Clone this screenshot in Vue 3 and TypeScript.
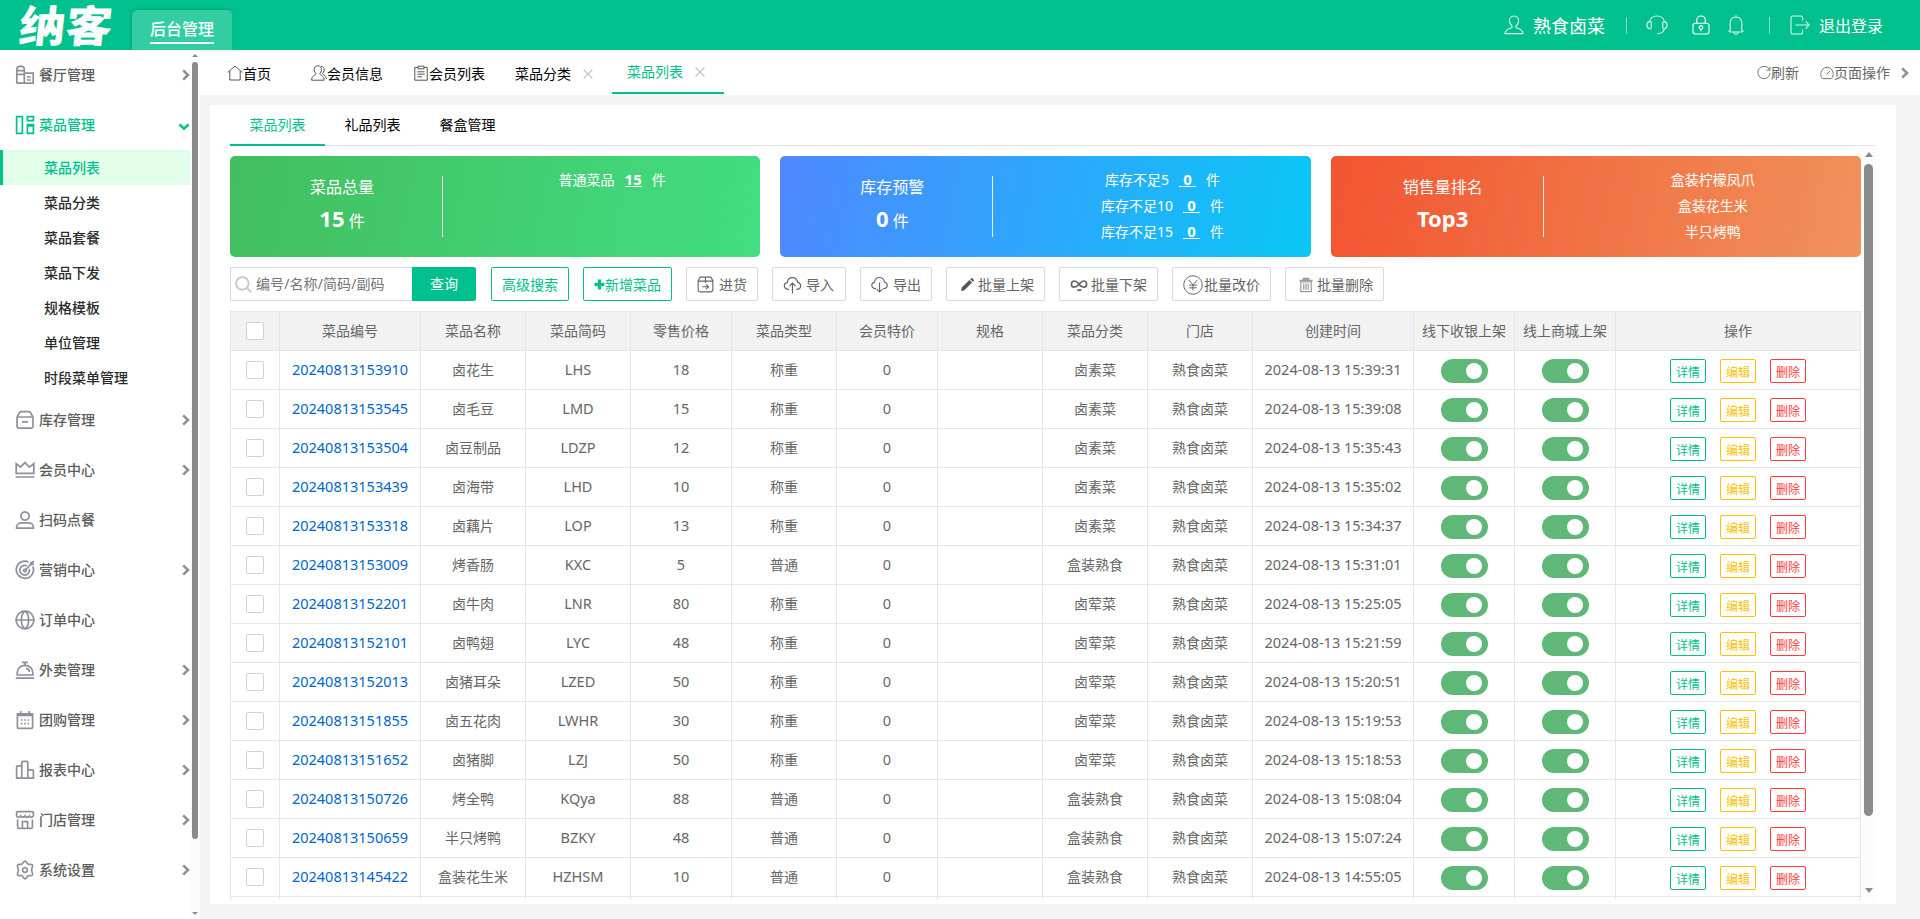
<script setup lang="ts">
interface MenuItem {
  label: string
  icon: string
  arrow: boolean
}

interface Dish {
  no: string
  name: string
  code: string
  price: string
  type: string
  category: string
  time: string
}

const topMenu: MenuItem[] = [
  { label: '餐厅管理', arrow: true, icon: 'M1.8 18.2V4.2C1.8 2.6 3.6 1.4 5.5 1.2C7.4 1.4 9.3 2.6 9.3 4.2V18.2M1.8 18.2H18.2V8.2H9.3M1.8 5.6H9.3M1.8 9.4H9.3M12 12H15.8M12 15H15.8' },
]

const subMenu: string[] = ['菜品列表', '菜品分类', '菜品套餐', '菜品下发', '规格模板', '单位管理', '时段菜单管理']

const bottomMenu: MenuItem[] = [
  { label: '库存管理', arrow: true, icon: 'M2 7L4.6 2.4C4.9 2 5.3 1.6 6 1.6H14C14.7 1.6 15.1 2 15.4 2.4L18 7M1.4 7H18.6M2 7V16.6C2 17.6 2.6 18.2 3.6 18.2H16.4C17.4 18.2 18 17.6 18 16.6V7M7 11.8H13' },
  { label: '会员中心', arrow: true, icon: 'M1.2 3.6L5.6 7.2L10 2.6L14.4 7.2L18.8 3.6V13.4H1.2ZM0.6 17H19.4' },
  { label: '扫码点餐', arrow: false, icon: 'M10 1.8A4.2 4.2 0 1 1 9.99 1.8M1.6 18.2V17C1.6 14.2 4.2 12.8 6.8 12.8H13.2C15.8 12.8 18.4 14.2 18.4 17V18.2Z' },
  { label: '营销中心', arrow: true, icon: 'M13.6 2A8.6 8.6 0 1 0 17.8 6.4M11.8 6A4.8 4.8 0 1 0 14.2 9M10 9.2A1.3 1.3 0 1 1 9.9 9.2M10 10.5L15.6 4.6M15.6 4.6L15.8 1.8M15.6 4.6L18.8 4.2M18.8 1.2L15.6 4.6' },
  { label: '订单中心', arrow: false, icon: 'M10 1.2A8.8 8.8 0 1 1 9.99 1.2M1.2 10H18.8M10 1.2C5.2 4 5.2 16 10 18.8M10 1.2C14.8 4 14.8 16 10 18.8' },
  { label: '外卖管理', arrow: true, icon: 'M2.2 15V12.8C2.2 8.4 5.6 5.4 10 5.4S17.8 8.4 17.8 12.8V15ZM7 2.4H13M10 2.4V5.4M0.8 18.2H19.2M11 8.4C13 8.8 14.4 10 14.6 12' },
  { label: '团购管理', arrow: true, icon: 'M2.4 3.8H17.6V17C17.6 17.8 17.2 18.4 16.4 18.4H3.6C2.8 18.4 2.4 17.8 2.4 17ZM2.4 5.4H17.6M5.8 1V5M14.2 1V5M5.8 10H7.4M9.2 10H10.8M12.6 10H14.2M5.8 13.6H7.4M9.2 13.6H10.8M12.6 13.6H14.2' },
  { label: '报表中心', arrow: true, icon: 'M6.8 18.2V2.6C6.8 1.8 7.2 1.4 8 1.4H11.6C12.4 1.4 12.8 1.8 12.8 2.6V18.2M6.8 5.8H2.8C2 5.8 1.6 6.2 1.6 7V18.2H18.4V11C18.4 10.2 18 9.8 17.2 9.8H12.8' },
  { label: '门店管理', arrow: true, icon: 'M2.6 9.4V17C2.6 17.8 3.2 18.4 4 18.4H16C16.8 18.4 17.4 17.8 17.4 17V9.4M2.8 1.6H17.2C18 1.6 18.4 2 18.4 2.8V5.4C18.4 7.6 15 7.6 14.4 6C13.6 7.6 10.8 7.6 10 6C9.2 7.6 6.4 7.6 5.6 6C5 7.6 1.6 7.6 1.6 5.4V2.8C1.6 2 2 1.6 2.8 1.6ZM7.4 18.4V11.6H12.6V18.4' },
  { label: '系统设置', arrow: true, icon: 'M10 1.2C11.4 1.2 12 3.6 13.2 4.2C14.4 4.8 16.6 3.8 17.4 5C18.2 6.4 16.6 8.2 16.6 10S18.2 13.6 17.4 15C16.6 16.2 14.4 15.2 13.2 15.8C12 16.4 11.4 18.8 10 18.8S8 16.4 6.8 15.8C5.6 15.2 3.4 16.2 2.6 15C1.8 13.6 3.4 11.8 3.4 10S1.8 6.4 2.6 5C3.4 3.8 5.6 4.8 6.8 4.2C8 3.6 8.6 1.2 10 1.2ZM10 7.6A2.4 2.4 0 1 1 9.99 7.6' },
]

const columns: string[] = ['菜品编号', '菜品名称', '菜品简码', '零售价格', '菜品类型', '会员特价', '规格', '菜品分类', '门店', '创建时间', '线下收银上架', '线上商城上架', '操作']

const make = (no: string, name: string, code: string, price: string, type: string, category: string, time: string): Dish =>
  ({ no, name, code, price, type, category, time: '2024-08-13 ' + time })

const dishes: Dish[] = [
  make('20240813153910', '卤花生', 'LHS', '18', '称重', '卤素菜', '15:39:31'),
  make('20240813153545', '卤毛豆', 'LMD', '15', '称重', '卤素菜', '15:39:08'),
  make('20240813153504', '卤豆制品', 'LDZP', '12', '称重', '卤素菜', '15:35:43'),
  make('20240813153439', '卤海带', 'LHD', '10', '称重', '卤素菜', '15:35:02'),
  make('20240813153318', '卤藕片', 'LOP', '13', '称重', '卤素菜', '15:34:37'),
  make('20240813153009', '烤香肠', 'KXC', '5', '普通', '盒装熟食', '15:31:01'),
  make('20240813152201', '卤牛肉', 'LNR', '80', '称重', '卤荤菜', '15:25:05'),
  make('20240813152101', '卤鸭翅', 'LYC', '48', '称重', '卤荤菜', '15:21:59'),
  make('20240813152013', '卤猪耳朵', 'LZED', '50', '称重', '卤荤菜', '15:20:51'),
  make('20240813151855', '卤五花肉', 'LWHR', '30', '称重', '卤荤菜', '15:19:53'),
  make('20240813151652', '卤猪脚', 'LZJ', '50', '称重', '卤荤菜', '15:18:53'),
  make('20240813150726', '烤全鸭', 'KQya', '88', '普通', '盒装熟食', '15:08:04'),
  make('20240813150659', '半只烤鸭', 'BZKY', '48', '普通', '盒装熟食', '15:07:24'),
  make('20240813145422', '盒装花生米', 'HZHSM', '10', '普通', '盒装熟食', '14:55:05'),
]

const stockLevels = [
  { label: '库存不足5', count: 0 },
  { label: '库存不足10', count: 0 },
  { label: '库存不足15', count: 0 },
]
const topSales: string[] = ['盒装柠檬凤爪', '盒装花生米', '半只烤鸭']
</script>

<template>
  <div class="page">
    <header class="header">
      <div class="logo">纳客</div>
      <div class="module"><span>后台管理</span></div>
      <div class="account">
        <svg class="ico user" viewBox="0 0 20 20"><path d="M10 1C12.9 1 14.6 3 14.6 5.8C14.6 8 13.6 9.8 12 11V12.6C15 13.6 19 14.6 19 18.6H1C1 14.6 5 13.6 8 12.6V11C6.4 9.8 5.4 8 5.4 5.8C5.4 3 7.1 1 10 1Z" /></svg>
        <span class="shop">熟食卤菜</span>
        <i class="sep first"></i>
        <svg class="ico headset" viewBox="0 0 22 20"><path d="M3.4 7.4C3.8 3.6 7 1 11 1S18.2 3.6 18.6 7.4M18.6 13C18 16.6 15.6 18.8 11 18.8M3.6 6.6C2 7 .9 8 .9 10.2S2 13.4 3.6 13.8C4.6 14 5.2 13.4 5.2 12.6V7.6C5.2 6.8 4.6 6.4 3.6 6.6ZM18.4 6.6C20 7 21.1 8 21.1 10.2S20 13.4 18.4 13.8C17.4 14 16.8 13.4 16.8 12.6V7.6C16.8 6.8 17.4 6.4 18.4 6.6Z" /></svg>
        <svg class="ico lock" viewBox="0 0 18 20"><path d="M3.4 8.2H14.6C16.2 8.2 17 9 17 10.4V16.8C17 18.2 16.2 19 14.6 19H3.4C1.8 19 1 18.2 1 16.8V10.4C1 9 1.8 8.2 3.4 8.2ZM4.8 8V5C4.8 2.6 6.4 1 9 1S13.2 2.6 13.2 5V8M9 10.6A1.8 1.8 0 1 1 8.99 10.6M9 14.2V16.2" /></svg>
        <svg class="ico bell" viewBox="0 0 16 20"><path d="M8 0.2V2M2.2 16.2V9C2.2 4.6 4.2 2 8 2S13.8 4.6 13.8 9V16.2M.6 15.6C.6 16.6 1.2 17 2.2 17H13.8C14.8 17 15.4 16.6 15.4 15.6M6 17.4C6 19.8 10 19.8 10 17.4" /></svg>
        <i class="sep second"></i>
        <svg class="ico exit" viewBox="0 0 20 20"><path d="M12.6 5.6V3C12.6 1.8 12 1 10.6 1H3C1.6 1 1 1.8 1 3V17C1 18.2 1.6 19 3 19H10.6C12 19 12.6 18.2 12.6 17V14.4M5.4 10H19M15.6 6.4L19.2 10L15.6 13.6" /></svg>
        <span class="logout">退出登录</span>
      </div>
    </header>

    <div class="body">
      <aside class="sidebar">
        <nav class="menu">
          <div v-for="item in topMenu" :key="item.label" class="entry">
            <svg class="mico" viewBox="0 0 20 20"><path :d="item.icon" /></svg>
            <span>{{ item.label }}</span>
            <svg v-if="item.arrow" class="chev" viewBox="0 0 8 12"><path d="M1.2 1.4L6 6L1.2 10.6" /></svg>
          </div>
          <div class="entry open">
            <svg class="mico" viewBox="0 0 20 20"><path d="M1.6 1.6H7.4V18.4H1.6ZM12.4 1.6H18.4V5.6H12.4ZM12.4 9.6H18.4V18.4H12.4ZM12.4 11H18.4" /></svg>
            <span>菜品管理</span>
            <svg class="chev down" viewBox="0 0 12 8"><path d="M1.4 1.4L6 5.8L10.6 1.4" /></svg>
          </div>
          <div v-for="(sub, i) in subMenu" :key="sub" class="sub" :class="{ active: i === 0 }">{{ sub }}</div>
          <div v-for="item in bottomMenu" :key="item.label" class="entry">
            <svg class="mico" viewBox="0 0 20 20"><path :d="item.icon" /></svg>
            <span>{{ item.label }}</span>
            <svg v-if="item.arrow" class="chev" viewBox="0 0 8 12"><path d="M1.2 1.4L6 6L1.2 10.6" /></svg>
          </div>
        </nav>
        <div class="track side-track"><i class="up"></i><i class="thumb"></i><i class="dn"></i></div>
      </aside>

      <main class="main">
        <div class="tabs">
          <div class="tab home">
            <svg class="tico" viewBox="0 0 16 16"><path d="M.8 7.4L8 1L15.2 7.4M2.8 6V15H13.2V6" /></svg><span>首页</span>
          </div>
          <div class="tab member">
            <svg class="tico" viewBox="0 0 16 16"><path d="M6.8 .8C9.2 .8 10.4 2.4 10.4 4.6C10.4 6.4 9.8 7.8 8.6 8.8C9.4 10.4 13.2 10.6 13.2 15.2H.6C.6 10.6 4.4 10.4 5.2 8.8C4 7.8 3.2 6.4 3.2 4.6C3.2 2.4 4.4 .8 6.8 .8ZM10 1.2C12.4 1.4 13.4 3 13.2 5C13 6.6 12.4 7.6 11.6 8.4C12 10 15.4 10.4 15.4 14" /></svg><span>会员信息</span>
          </div>
          <div class="tab list">
            <svg class="tico" viewBox="0 0 14 16"><path d="M4 2.4H.8V15.2H13.2V2.4H10M4 1.2H10V3.8H4ZM3.4 6.8H10.6M3.4 9.2H10.6M3.4 11.8H8" /></svg><span>会员列表</span>
          </div>
          <div class="tab closable"><span>菜品分类</span><svg class="close" viewBox="0 0 10 10"><path d="M.6 .6L9.4 9.4M9.4 .6L.6 9.4" /></svg></div>
          <div class="tab closable current"><span>菜品列表</span><svg class="close" viewBox="0 0 10 10"><path d="M.6 .6L9.4 9.4M9.4 .6L.6 9.4" /></svg></div>
          <div class="tools">
            <svg class="refresh" viewBox="0 0 14 14"><path d="M12.6 3.8A6.2 6.2 0 1 0 13.2 7M13 .8V4.2H9.4" /></svg>
            <span>刷新</span>
            <svg class="gauge" viewBox="0 0 14 14"><path d="M2.4 12.6C-.2 9.4 .6 5.2 3 3C5.4 .8 8.6 .8 11 3C13.4 5.2 14.2 9.4 11.6 12.6ZM6.4 8.6L10 5" /></svg>
            <span>页面操作</span>
            <svg class="chev next" viewBox="0 0 8 12"><path d="M1.2 1.4L6 6L1.2 10.6" /></svg>
          </div>
        </div>

        <section class="panel">
          <div class="inner-tabs">
            <span class="on">菜品列表</span><span>礼品列表</span><span>餐盒管理</span>
          </div>
          <div class="scroller">
            <div class="content">
              <div class="cards">
                <div class="card green">
                  <div class="total"><p>菜品总量</p><p><b>15</b> 件</p></div>
                  <i class="rule"></i>
                  <div class="detail"><p><span>普通菜品</span><u>15</u><span>件</span></p></div>
                </div>
                <div class="card blue">
                  <div class="total"><p>库存预警</p><p><b>0</b> 件</p></div>
                  <i class="rule"></i>
                  <div class="detail">
                    <p v-for="s in stockLevels" :key="s.label"><span>{{ s.label }}</span><u>{{ s.count }}</u><span>件</span></p>
                  </div>
                </div>
                <div class="card orange">
                  <div class="total"><p>销售量排名</p><p><b>Top3</b></p></div>
                  <i class="rule"></i>
                  <div class="detail"><p v-for="s in topSales" :key="s">{{ s }}</p></div>
                </div>
              </div>

              <div class="toolbar">
                <div class="search">
                  <svg viewBox="0 0 18 18"><path d="M7.8 1.2A6.6 6.6 0 1 1 7.79 1.2M12.6 12.6L17 17" /></svg>
                  <span>编号/名称/简码/副码</span>
                </div>
                <button class="query">查询</button>
                <button class="btn line">高级搜索</button>
                <button class="btn line add">
                  <svg viewBox="0 0 12 12"><path d="M6 .6V11.4M.6 6H11.4" /></svg>新增菜品
                </button>
                <button class="btn stock"><svg viewBox="0 0 18 18"><path d="M3.4 1.2H14.6L16.8 5V14.4C16.8 16 16 16.8 14.4 16.8H3.6C2 16.8 1.2 16 1.2 14.4V5ZM1.2 5.4H16.8M9 1.2V7.4M5.6 11.4H12M9.6 8.8L12.2 11.4L9.6 14" /></svg><span>进货</span></button>
                <button class="btn import"><svg viewBox="0 0 18 18"><path d="M5.4 13.4C2.6 13.6 .8 12 .8 9.8C.8 8 2 6.8 3.8 6.6C4 3.6 6 1.6 9 1.6S13.6 3.4 14.2 6.4C16 6.8 17.2 8 17.2 9.8C17.2 12 15.6 13.4 12.8 13.4M9 17.4V7.4M6 10.2L9 7.2L12 10.2" /></svg><span>导入</span></button>
                <button class="btn export"><svg viewBox="0 0 18 18"><path d="M5.4 13.4C2.6 13.6 .8 12 .8 9.8C.8 8 2 6.8 3.8 6.6C4 3.6 6 1.6 9 1.6S13.6 3.4 14.2 6.4C16 6.8 17.2 8 17.2 9.8C17.2 12 15.6 13.4 12.8 13.4M9 7V16.8M6 14L9 17L12 14" /></svg><span>导出</span></button>
                <button class="btn batch"><svg class="solid" viewBox="0 0 16 16"><path d="M2 14L2.8 10.6L10.4 3L13 5.6L5.4 13.2ZM11.2 2.2L12.2 1.2C12.8 .6 15.4 3 14.8 3.8L13.8 4.8Z" /></svg>批量上架</button>
                <button class="btn batch"><svg class="loop" viewBox="0 0 18 16"><path d="M9 7.4C7.4 5.2 6 4 4.4 4C2.6 4 1.4 5.4 1.4 7.2S2.6 10.2 4.4 10.2C6 10.2 7.4 9 9 7.4C10.6 5.4 12 4 13.6 4C15.4 4 16.6 5.4 16.6 7.2S15.4 10.2 13.6 10.2C12 10.2 10.6 9.4 9 7.4M7.2 13.2H11.4" /></svg>批量下架</button>
                <button class="btn batch"><svg class="yen" viewBox="0 0 20 20"><path d="M10 .8A9.2 9.2 0 1 1 9.99 .8M5.8 5L10 10L14.2 5M10 10V15.6M6.2 10.2H13.8M6.2 12.8H13.8" /></svg>批量改价</button>
                <button class="btn batch"><svg class="bin" viewBox="0 0 16 16"><path class="lid" d="M1.4 3.6H14.6M5.6 3.4V1.6H10.4V3.4" /><path d="M2.8 5H13.2V14.6H2.8ZM5.8 6.6V12.8M8 6.6V12.8M10.2 6.6V12.8" /></svg>批量删除</button>
              </div>

              <div class="table">
                <div class="row head">
                  <div class="cell"><i class="check"></i></div>
                  <div v-for="c in columns" :key="c" class="cell">{{ c }}</div>
                </div>
                <div v-for="d in dishes" :key="d.no" class="row">
                  <div class="cell"><i class="check"></i></div>
                  <div class="cell num link">{{ d.no }}</div>
                  <div class="cell">{{ d.name }}</div>
                  <div class="cell num">{{ d.code }}</div>
                  <div class="cell num">{{ d.price }}</div>
                  <div class="cell">{{ d.type }}</div>
                  <div class="cell num">0</div>
                  <div class="cell"></div>
                  <div class="cell">{{ d.category }}</div>
                  <div class="cell">熟食卤菜</div>
                  <div class="cell num">{{ d.time }}</div>
                  <div class="cell"><i class="switch"></i></div>
                  <div class="cell"><i class="switch"></i></div>
                  <div class="cell ops"><span class="view">详情</span><span class="edit">编辑</span><span class="del">删除</span></div>
                </div>
                <div class="row">
                  <div v-for="n in 14" :key="n" class="cell"></div>
                </div>
              </div>
            </div>
            <div class="track main-track"><i class="up"></i><i class="thumb"></i><i class="dn"></i></div>
          </div>
        </section>
      </main>
    </div>
  </div>
</template>

<style>
html,
body {
  margin: 0;
  overflow: hidden;
}
</style>

<style scoped>
.page {
  display: flex;
  flex-direction: column;
  width: 1920px;
  height: 919px;
  overflow: hidden;
  background: #f4f4f4;
  color: #666;
  font: 14px/20px 'Noto Sans', 'Noto Sans CJK SC', sans-serif;
}
.page * {
  box-sizing: border-box;
}
p {
  margin: 0;
}
svg {
  display: block;
  flex: none;
  fill: none;
  stroke: currentColor;
}

.header {
  display: flex;
  flex: none;
  height: 50px;
  background: #00c18d;
  color: #fff;
}
.logo {
  width: 88px;
  height: 50px;
  margin: 0 4px 0 23px;
  font: 900 43px/46px 'Noto Sans CJK SC', sans-serif;
  white-space: nowrap;
  transform: skewX(-6deg) scaleX(1.08);
}
.module {
  width: 100px;
  height: 40px;
  margin: 10px 0 0 17px;
  padding: 7px 18px 0;
  border-radius: 5px 5px 0 0;
  background: #33cda4;
  box-shadow: -1px -1px 3px rgba(0, 0, 0, 0.15);
  font-size: 16px;
  font-weight: 500;
  white-space: nowrap;
}
.module span {
  display: block;
  height: 27px;
  line-height: 24px;
  border-bottom: 2px solid #fff;
}
.account {
  display: flex;
  align-items: center;
  width: 416px;
  height: 50px;
  margin-left: auto;
}
.ico {
  height: 20px;
  stroke-width: 1.1;
  opacity: 0.85;
}
.ico.user { width: 20px; }
.shop {
  width: 72px;
  margin: 1px 21px 0 9px;
  font-size: 18px;
  white-space: nowrap;
}
.sep {
  width: 1px;
  height: 17px;
  background: rgba(255, 255, 255, 0.5);
}
.ico.headset { width: 22px; margin-left: 19px; }
.ico.lock { width: 18px; margin-left: 24px; opacity: 1; }
.ico.bell { width: 16px; margin-left: 18px; }
.sep.second { margin-left: 25px; }
.ico.exit { width: 20px; margin-left: 20px; }
.logout {
  margin: 1px 0 0 9px;
  font-size: 16px;
}

.body {
  display: flex;
  height: 869px;
}
.sidebar {
  display: flex;
  width: 200px;
  background: #fff;
}
.menu {
  width: 190px;
  font-weight: 500;
}
.entry {
  display: flex;
  align-items: center;
  height: 50px;
  padding: 0 0 0 15px;
  color: #5c5c5c;
}
.entry span {
  margin-left: 4px;
}
.entry.open {
  color: #00c18d;
}
.mico {
  width: 20px;
  height: 20px;
  stroke: #8f8f9c;
  stroke-width: 1.7;
}
.open .mico,
.open .chev {
  stroke: #00c18d;
}
.chev {
  width: 8px;
  height: 12px;
  margin-left: auto;
  stroke: #8f8f9c;
  stroke-width: 2.6;
}
.chev.down {
  width: 12px;
  height: 8px;
  margin-top: 3px;
}
.sub {
  height: 35px;
  padding-left: 44px;
  line-height: 36px;
  color: #2b2b2b;
}
.sub.active {
  padding-left: 41px;
  border-left: 3px solid #00c18d;
  background: #e3fdeb;
  color: #00c18d;
}

.track {
  display: flex;
  flex-direction: column;
  align-items: center;
  background: #fcfcfc;
}
.track .thumb {
  border-radius: 5px;
  background: #8b8b8b;
}
.track .up,
.track .dn {
  width: 0;
  height: 0;
  border: solid transparent;
}
.side-track {
  width: 10px;
  padding-top: 4px;
}
.side-track .up,
.side-track .dn { border-width: 0 3px 3px; border-bottom-color: #8b8b8b; }
.side-track .thumb { width: 6px; height: 777px; margin-top: 5px; }
.side-track .dn { margin-top: 73px; transform: rotate(180deg); }
.main-track {
  width: 15px;
  padding-top: 6px;
}
.main-track .up,
.main-track .dn { border-width: 0 4.5px 5px; border-bottom-color: #8b8b8b; }
.main-track .thumb { width: 9px; height: 652px; margin-top: 7px; }
.main-track .dn { margin-top: 72px; transform: rotate(180deg); }

.main {
  flex: 1;
  padding-top: 2px;
}
.tabs {
  display: flex;
  height: 43px;
  padding-left: 12px;
  background: #fff;
  color: #000;
}
.tab {
  display: flex;
  align-items: center;
  padding: 0 15px;
}
.tico {
  width: 16px;
  height: 16px;
  margin-top: -1px;
  stroke: #555;
  stroke-width: 1;
}
.tab.home { width: 84px; }
.tab.member { width: 103px; }
.tab.list { width: 101px; }
.list .tico { width: 14px; margin-right: 1px; }
.tab.closable {
  width: 112px;
  padding: 0 15px;
}
.close {
  width: 10px;
  height: 10px;
  margin-left: 12px;
  stroke: #c2c2c2;
  stroke-width: 1.3;
}
.tab.current {
  height: 42px;
  border-bottom: 2px solid #00c18d;
  color: #00c18d;
}
.tools {
  display: flex;
  align-items: center;
  width: 163px;
  height: 42px;
  margin-left: auto;
  color: #666;
}
.refresh,
.gauge {
  width: 14px;
  height: 14px;
  stroke: #777;
}
.gauge { margin-left: 21px; }
.next { margin-left: 11px; }

.panel {
  width: 1686px;
  height: 799px;
  margin: 10px 0 0 10px;
  padding: 0 20px;
  background: #fff;
}
.inner-tabs {
  display: flex;
  height: 41px;
  border-bottom: 1px solid #e6e6e6;
  color: #000;
}
.inner-tabs span {
  width: 95px;
  height: 41px;
  line-height: 40px;
  text-align: center;
}
.inner-tabs .on {
  border-bottom: 2px solid #00c18d;
  color: #00c18d;
}
.scroller {
  display: flex;
  height: 754px;
}
.content {
  width: 1631px;
  padding-top: 10px;
  overflow: hidden;
}
.cards {
  display: grid;
  grid-template-columns: repeat(3, 1fr);
  gap: 20px;
}
.card {
  display: flex;
  height: 101px;
  border-radius: 5px;
  color: #fff;
}
.green { background: linear-gradient(100deg, #42be5e, #42dd82); }
.blue { background: linear-gradient(100deg, #4f88ff, #0ac7f5); }
.orange { background: linear-gradient(100deg, #f25430, #f09259); }
.total {
  width: 212px;
  padding: 19px 0 0 12px;
  font-size: 16px;
  line-height: 24px;
  text-align: center;
}
.total p + p {
  margin-top: 7px;
}
.total b {
  font-size: 22px;
}
.rule {
  width: 1px;
  height: 61px;
  margin-top: 20px;
  background: rgba(255, 255, 255, 0.85);
}
.detail {
  flex: 1;
  padding: 11px 0 0 21px;
}
.detail p {
  display: flex;
  justify-content: center;
  height: 26px;
  line-height: 25px;
}
.detail u {
  min-width: 17px;
  height: 20px;
  margin: 0 10px;
  border-bottom: 1px solid #fff;
  font-size: 15px;
  font-weight: 700;
  line-height: 25px;
  text-align: center;
  text-decoration: none;
}

.toolbar {
  display: flex;
  height: 34px;
  margin: 10px 0;
}
.search {
  display: flex;
  align-items: center;
  width: 182px;
  border: 1px solid #d9d9d9;
  border-right: 0;
  border-radius: 2px 0 0 2px;
  color: #757575;
}
.search svg {
  width: 17px;
  height: 17px;
  margin: 0 4px 0 4px;
  stroke: #c8c8c8;
  stroke-width: 2;
}
.search span {
  letter-spacing: 0.1px;
  white-space: nowrap;
}
button {
  margin: 0;
  padding: 0;
  border: 0;
  border-radius: 2px;
  background: #fff;
  color: #666;
  font: inherit;
  white-space: nowrap;
}
.query {
  width: 64px;
  margin-right: 1px;
  padding-bottom: 1px;
  border-radius: 0 2px 2px 0;
  background: #00c18d;
  color: #fff;
}
.btn {
  display: flex;
  align-items: center;
  height: 34px;
  margin-left: 14px;
  padding: 1px 10px 0;
  border: 1px solid #d9d9d9;
}
.btn.line {
  border-color: #00c18d;
  color: #00c18d;
}
.add svg { width: 11px; height: 11px; margin-top: -1px; stroke-width: 3.6; }
.stock svg { width: 17px; height: 17px; margin-right: 5px; }
.import svg { width: 19px; height: 18px; margin-right: 4px; }
.export svg { width: 17px; height: 17px; margin-right: 5px; }
.import { width: 74px; }
.stock svg, .import svg, .export svg { stroke-width: 1.2; }
.stock span, .import span, .export span { margin-top: 1px; }
.batch svg { width: 16px; height: 16px; margin: 0 3px 0 2px; }
.batch .solid { fill: #555; stroke: none; }
.batch .loop { width: 18px; margin: 0 3px 0 0; stroke-width: 1.7; }
.batch .yen { width: 20px; height: 20px; margin: 0 1px 0 0; stroke-width: 1; }
.batch .bin { stroke: #999; stroke-width: 1.2; }
.bin .lid { stroke-width: 1.8; }

.table {
  border-left: 1px solid #e6e6e6;
  border-top: 1px solid #e6e6e6;
}
.row {
  display: grid;
  grid-template-columns: 49px 141px 105px 105px 101px 105px 101px 105px 105px 105px 161px 101px 101px 245px;
  height: 39px;
}
.head {
  background: #f2f2f2;
}
.cell {
  display: flex;
  align-items: center;
  justify-content: center;
  border-right: 1px solid #e6e6e6;
  border-bottom: 1px solid #e6e6e6;
  white-space: nowrap;
}
.num {
  padding-bottom: 2px;
  font-size: 14.5px;
}
.link {
  color: #0066cc;
}
.check {
  width: 18px;
  height: 18px;
  border: 1px solid #d2d2d2;
  border-radius: 2px;
  background: #fff;
}
.switch {
  display: flex;
  align-items: center;
  justify-content: flex-end;
  width: 47px;
  height: 24px;
  margin-top: 2px;
  padding-right: 6px;
  border-radius: 12px;
  background: #5fb878;
}
.switch::after {
  width: 16px;
  height: 16px;
  border-radius: 50%;
  background: #fff;
  content: '';
}
.ops {
  gap: 14px;
  padding-top: 2px;
  font-size: 12px;
}
.ops span {
  width: 36px;
  height: 24px;
  border: 1px solid;
  border-radius: 2px;
  line-height: 26px;
  text-align: center;
}
.view { color: #00c18d; }
.edit { color: #ffc107; }
.del { color: #ff3b3b; }
</style>
